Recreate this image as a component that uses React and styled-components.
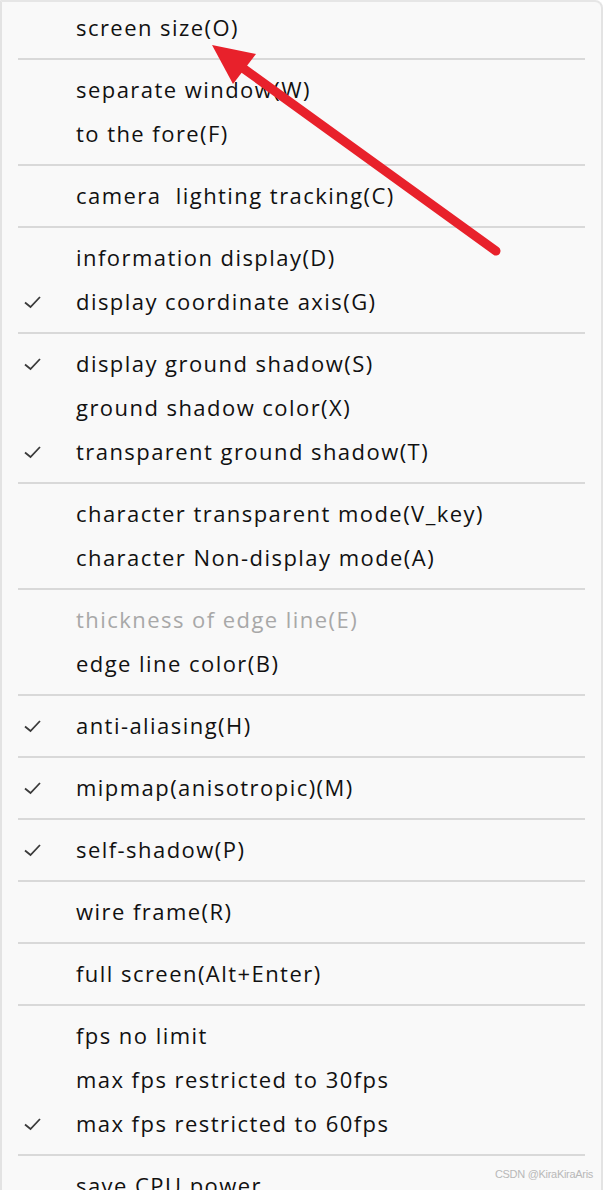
import React from 'react';
import styled, { createGlobalStyle } from 'styled-components';

const GlobalStyle = createGlobalStyle`
    html, body {
        margin: 0;
        padding: 0;
        background: #ffffff;
        overflow: hidden;
    }
    body {
        width: 604px;
        height: 1190px;
    }
`

const Page = styled.div`
    position: relative;
    width: 604px;
    height: 1190px;
    overflow: hidden;
    background: #ffffff;
`
const Menu = styled.div`
    box-sizing: border-box;
    width: 603px;
    height: 1210px;
    background: #f9f9f9;
    border-top: 2px solid #e6e6e6;
    border-left: 2px solid #e3e3e3;
    border-right: 2px solid #e3e3e3;
    border-top-right-radius: 8px;
    padding-top: 4px;
    font-family: "Open Sans", "Noto Sans", sans-serif;
`
const Item = styled.div`
    display: grid;
    grid-template-columns: 74px 1fr;
    align-items: center;
    box-sizing: border-box;
    height: 44px;
    padding-bottom: 2px;
    font-size: 22px;
    letter-spacing: 1.45px;
    color: ${p => p.disabled ? '#a8a8a8' : '#111111'};
    white-space: pre;
`
const Check = styled.span`
    display: flex;
    align-items: center;
    padding-left: 21px;
    padding-top: 2px;
`
const Sep = styled.div`
    height: 18px;
    display: flex;
    align-items: center;
    padding: 0 16px 0 16px;
    &::after {
        content: '';
        flex: 1;
        height: 2px;
        background: #d9d9d9;
    }
`
const Watermark = styled.div`
    position: absolute;
    right: 11px;
    bottom: 10px;
    font-family: "Liberation Sans", sans-serif;
    font-size: 11px;
    letter-spacing: -0.3px;
    color: #b8b8b8;
`
const Arrow = styled.svg`
    position: absolute;
    left: 0;
    top: 0;
    pointer-events: none;
`

const CheckMark = () => (
    <svg width="20" height="14" viewBox="0 0 20 14">
        <path d="M2 7.5 L7.5 12 L17 2" fill="none" stroke="#3a3a3a" strokeWidth="1.8" />
    </svg>
)

const groups = [
    [['screen size(O)']],
    [['separate window(W)'], ['to the fore(F)']],
    [['camera  lighting tracking(C)']],
    [['information display(D)'], ['display coordinate axis(G)', 'check']],
    [['display ground shadow(S)', 'check'], ['ground shadow color(X)'], ['transparent ground shadow(T)', 'check']],
    [['character transparent mode(V_key)'], ['character Non-display mode(A)']],
    [['thickness of edge line(E)', 'disabled'], ['edge line color(B)']],
    [['anti-aliasing(H)', 'check']],
    [['mipmap(anisotropic)(M)', 'check']],
    [['self-shadow(P)', 'check']],
    [['wire frame(R)']],
    [['full screen(Alt+Enter)']],
    [['fps no limit'], ['max fps restricted to 30fps'], ['max fps restricted to 60fps', 'check']],
    [['save CPU power']],
]

function App() {
    return (
        <Page>
            <GlobalStyle />
            <Menu>
                {groups.map((g, i) => (
                    <React.Fragment key={i}>
                        {i > 0 && <Sep />}
                        {g.map(([label, flag]) => (
                            <Item key={label} disabled={flag === 'disabled'}>
                                <Check>{flag === 'check' && <CheckMark />}</Check>
                                <span>{label}</span>
                            </Item>
                        ))}
                    </React.Fragment>
                ))}
            </Menu>
            <Arrow width="604" height="1190">
                <line x1="496" y1="251" x2="240" y2="66" stroke="#e8212b" strokeWidth="9" strokeLinecap="round" />
                <polygon points="212,45 256,54 233,84" fill="#e8212b" />
            </Arrow>
            <Watermark>CSDN @KiraKiraAris</Watermark>
        </Page>
    )
}
export default App;
